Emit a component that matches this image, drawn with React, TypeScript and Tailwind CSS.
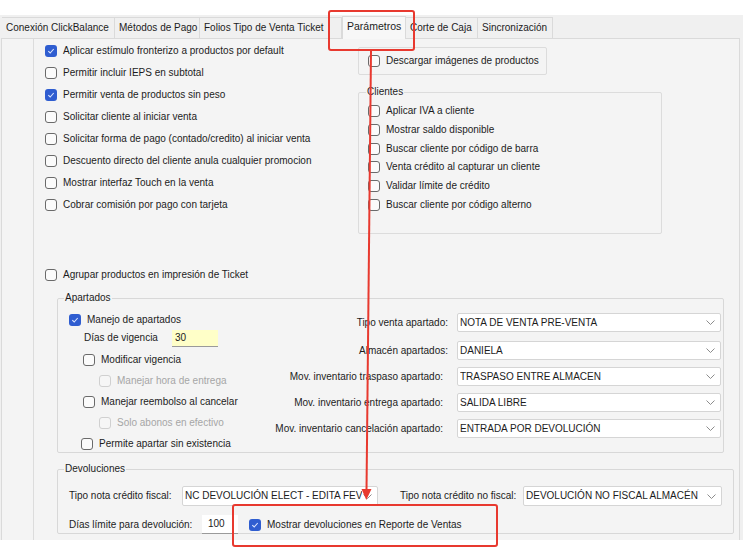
import React from 'react';

function Check({ on = false, off = false }: { on?: boolean; off?: boolean }) {
	if (on)
		return (
			<span className="flex h-[12px] w-[12px] shrink-0 items-center justify-center rounded-[3px] bg-[#2f5dd0]">
				<svg width="8" height="8" viewBox="0 0 8 8">
					<path d="M1.3 4.2 3.2 6 6.7 2" fill="none" stroke="#dce6ff" strokeWidth="1.1" />
				</svg>
			</span>
		);
	return (
		<span
			className={`h-[12px] w-[12px] shrink-0 rounded-[3px] border ${off ? 'border-[#d0d0d0] bg-[#f6f6f6]' : 'border-[#6a6a6a] bg-[#fbfbfb]'}`}
		/>
	);
}

function Row({
	label,
	on,
	off,
	className = ''
}: {
	label: string;
	on?: boolean;
	off?: boolean;
	className?: string;
}) {
	return (
		<div className={`flex items-center gap-[6px] whitespace-nowrap ${className}`}>
			<Check on={on} off={off} />
			<span className={off ? 'text-[#a6a6a6]' : ''}>{label}</span>
		</div>
	);
}

function Select({ value, className = '' }: { value: string; className?: string }) {
	return (
		<div
			className={`flex h-[19px] items-center rounded-[2px] border border-[#d5d5d5] bg-white pl-[2px] ${className}`}
		>
			<span className="min-w-0 flex-1 overflow-hidden whitespace-nowrap leading-[16px]">{value}</span>
			<svg width="9" height="5" viewBox="0 0 9 5" className="ml-[1px] mr-[5px] shrink-0">
				<path d="M.5.5 4.5 4.5 8.5.5" fill="none" stroke="#8c8c8c" />
			</svg>
		</div>
	);
}

function Tab({ name, width, active = false }: { name: string; width: string; active?: boolean }) {
	return (
		<div
			className={`flex shrink-0 items-center whitespace-nowrap border-r border-[#dadada] pl-[4px] ${width} ${active ? 'relative z-10 -mb-[1px] h-[23px] border-l border-t bg-[#f7f7f7] pb-[4px] text-[10.5px]' : 'h-[21px] border-t bg-[#f0f0f0]'}`}
		>
			{name}
		</div>
	);
}

const apartados = [
	{ label: 'Tipo venta apartado:', value: 'NOTA DE VENTA PRE-VENTA', gap: 'mr-[9px]', mt: 'mt-[9px]' },
	{ label: 'Almacén apartados:', value: 'DANIELA', gap: 'mr-[9px]', mt: 'mt-[9px]' },
	{ label: 'Mov. inventario traspaso apartado:', value: 'TRASPASO ENTRE ALMACEN', gap: 'mr-[14px]', mt: 'mt-[7px]' },
	{ label: 'Mov. inventario entrega apartado:', value: 'SALIDA LIBRE', gap: 'mr-[14px]', mt: 'mt-[7px]' },
	{ label: 'Mov. inventario cancelación apartado:', value: 'ENTRADA POR DEVOLUCIÓN', gap: 'mr-[14px]', mt: 'mt-[7px]' }
];

export default function App() {
	return (
		<div className="relative h-[557px] w-[743px] overflow-hidden bg-white font-['Liberation_Sans',Arial,sans-serif] text-[10px] leading-[12px] text-[#1c1c1c]">
			<div className="h-[15px]" />
			<div className="flex h-[525px] flex-col bg-[#f0f0f0]">
				{/* tabs */}
				<div className="flex h-[23px] items-end pl-[2px]">
					<Tab name="Conexión ClickBalance" width="w-[113px]" />
					<Tab name="Métodos de Pago" width="w-[85px]" />
					<Tab name="Folios Tipo de Venta Ticket" width="w-[142px]" />
					<Tab name="Parámetros" width="w-[64px]" active />
					<Tab name="Corte de Caja" width="w-[72px]" />
					<Tab name="Sincronización" width="w-[75px]" />
				</div>

				<div className="ml-[1px] mr-[3px] flex h-[502px] border-l border-r border-t border-[#dadada] bg-[#f4f4f4]">
					<div className="w-[31px] shrink-0" />
					<div className="flex-1 border-l border-[#dcdcdc]">
						{/* top section */}
						<div className="flex">
							<div className="w-[324px] shrink-0 pl-[11px] pt-[1px]">
								<Row label="Aplicar estímulo fronterizo a productos por default" on className="h-[22px]" />
								<Row label="Permitir incluir IEPS en subtotal" className="h-[22px]" />
								<Row label="Permitir venta de productos sin peso" on className="h-[22px]" />
								<Row label="Solicitar cliente al iniciar venta" className="h-[22px]" />
								<Row label="Solicitar forma de pago (contado/credito) al iniciar venta" className="h-[22px]" />
								<Row label="Descuento directo del cliente anula cualquier promocion" className="h-[22px]" />
								<Row label="Mostrar interfaz Touch en la venta" className="h-[22px]" />
								<Row label="Cobrar comisión por pago con tarjeta" className="h-[22px]" />
							</div>
							<div className="w-[304px] shrink-0">
								<div className="mt-[8px] flex h-[28px] w-[189px] items-center rounded-[2px] border border-[#dcdcdc] pl-[9px]">
									<Row label="Descargar imágenes de productos" />
								</div>
								<fieldset className="mt-[11px] h-[148px] rounded-[2px] border border-[#dcdcdc] pl-[9px]">
									<legend className="ml-[-2px] px-[1px]">Clientes</legend>
									<div className="mt-[4px]">
										<Row label="Aplicar IVA a cliente" className="h-[18.7px]" />
										<Row label="Mostrar saldo disponible" className="h-[18.7px]" />
										<Row label="Buscar cliente por código de barra" className="h-[18.7px]" />
										<Row label="Venta crédito al capturar un cliente" className="h-[18.7px]" />
										<Row label="Validar límite de crédito" className="h-[18.7px]" />
										<Row label="Buscar cliente por código alterno" className="h-[18.7px]" />
									</div>
								</fieldset>
							</div>
						</div>

						<Row label="Agrupar productos en impresión de Ticket" className="ml-[11px] mt-[30px] h-[22px]" />

						{/* Apartados */}
						<fieldset className="ml-[23px] mt-[6px] flex h-[161px] w-[667px] rounded-[2px] border border-[#d8d8d8]">
							<legend className="ml-[6px] px-[1px]">Apartados</legend>
							<div className="flex w-full">
								<div className="w-[190px] shrink-0 pl-[11px]">
									<Row label="Manejo de apartados" on className="mt-[7px] h-[18px]" />
									<div className="flex h-[18px] items-center pl-[15px]">
										<span className="w-[88px]">Días de vigencia</span>
										<div className="flex h-[17px] w-[46px] items-center border-b border-[#9a9a9a] bg-[#ffffc8] pl-[3px]">
											30
										</div>
									</div>
									<Row label="Modificar vigencia" className="ml-[14px] mt-[2px] h-[21px]" />
									<Row label="Manejar hora de entrega" off className="ml-[30px] h-[21px]" />
									<Row label="Manejar reembolso al cancelar" className="ml-[14px] h-[21px]" />
									<Row label="Solo abonos en efectivo" off className="ml-[30px] h-[21px]" />
									<Row label="Permite apartar sin existencia" className="ml-[12px] h-[21px]" />
								</div>
								<div className="flex-1 pr-[2px]">
									{apartados.map((a) => (
										<div key={a.label} className={`flex h-[19px] items-center justify-end ${a.mt}`}>
											<span className={`whitespace-nowrap ${a.gap}`}>{a.label}</span>
											<Select value={a.value} className="w-[264px]" />
										</div>
									))}
								</div>
							</div>
						</fieldset>

						{/* Devoluciones */}
						<fieldset className="ml-[23px] mt-[10px] h-[71px] w-[677px] rounded-[2px] border border-[#d8d8d8] pl-[11px]">
							<legend className="ml-[-5px] px-[1px]">Devoluciones</legend>
							<div className="mt-[11px] flex h-[20px] items-center">
								<span className="w-[113px] whitespace-nowrap">Tipo nota crédito fiscal:</span>
								<Select value="NC DEVOLUCIÓN ELECT - EDITA FEV" className="h-[20px] w-[196px]" />
								<span className="ml-[22px] w-[123px] whitespace-nowrap">Tipo nota crédito no fiscal:</span>
								<Select value="DEVOLUCIÓN NO FISCAL ALMACÉN" className="h-[20px] w-[199px]" />
							</div>
							<div className="mt-[9px] flex h-[19px] items-center">
								<span className="w-[133px] whitespace-nowrap">Días límite para devolución:</span>
								<div className="flex h-[19px] w-[36px] items-center border-b border-[#9a9a9a] bg-white pl-[6px]">
									100
								</div>
								<Row label="Mostrar devoluciones en Reporte de Ventas" on className="ml-[11px]" />
							</div>
						</fieldset>
					</div>
				</div>
			</div>

			{/* annotations */}
			<div className="absolute left-[328px] top-[10px] h-[41px] w-[87px] rounded-[3px] border-2 border-[#e8392f]" />
			<div className="absolute left-[232px] top-[504px] h-[43px] w-[266px] rounded-[3px] border-2 border-[#e8392f]" />
			<svg className="absolute left-0 top-0" width="743" height="557">
				<line x1="371" y1="51" x2="366.5" y2="492" stroke="#e8392f" strokeWidth="2" />
				<polygon points="361.5,489 371.5,489 366.3,500" fill="#e8392f" />
			</svg>
		</div>
	);
}
